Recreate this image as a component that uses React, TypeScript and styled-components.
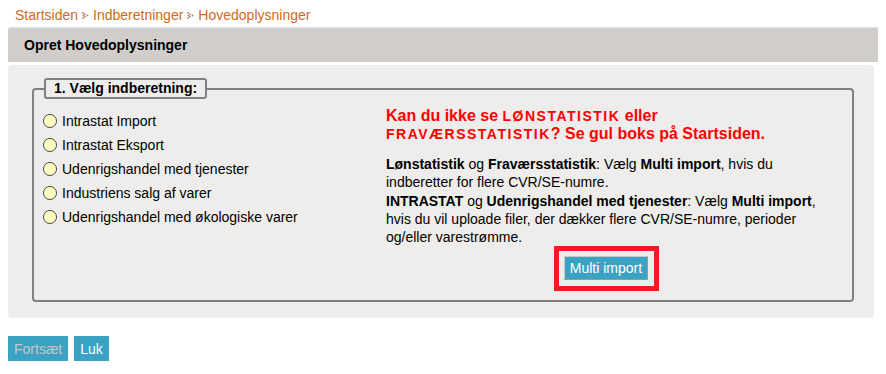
import styled, { createGlobalStyle } from "styled-components";

const GlobalStyle = createGlobalStyle`
  body {
    margin: 8px;
    background: #ffffff;
    font-family: "Liberation Sans", Arial, sans-serif;
    font-size: 14px;
    color: #000;
    overflow: hidden;
  }
`;

const Breadcrumb = styled.nav`
  height: 19px;
  padding-left: 7px;
  display: flex;
  align-items: flex-start;
  gap: 4px;
  font-size: 14px;
  color: #d06a1c;
  line-height: 15px;
`;

const Crumb = styled.a`
  color: #d06a1c;
  text-decoration: none;
`;

const SepIcon = styled.svg`
  margin-top: 4px;
`;

const Header = styled.div`
  height: 35px;
  margin-right: -8px;
  background: #d1cdca;
  border-top: 1px solid #e4e2e0;
  box-sizing: border-box;
  border-radius: 3px 0 0 0;
  display: flex;
  align-items: center;
  padding-left: 16px;
  font-size: 14px;
  font-weight: bold;
`;

const Panel = styled.div`
  margin: 3px 4px 0 0;
  background: #eeedeb;
  border-radius: 4px;
  padding: 13px 20px 16px 24px;
`;

const Fieldset = styled.fieldset`
  margin: 0;
  border: 2px solid #808080;
  border-radius: 4px;
  padding: 8px 8px 9px 8px;
`;

const Legend = styled.legend`
  margin-left: 2px;
  padding: 1px 8px 2px;
  border: 2px solid #808080;
  border-radius: 3px;
  background: #eeedeb;
  font-size: 14px;
  font-weight: bold;
  line-height: 14px;
`;

const Columns = styled.div`
  display: flex;
`;

const RadioList = styled.ul`
  list-style: none;
  margin: 2px 0 0 0;
  padding: 0;
  width: 344px;
`;

const RadioRow = styled.li`
  height: 24px;
  display: flex;
  align-items: center;
  gap: 5px;
`;

const Radio = styled.input`
  appearance: none;
  margin: 0 0 0 1px;
  width: 14px;
  height: 14px;
  border-radius: 50%;
  border: 1px solid #4a4a4a;
  background: #ffffc2;
  box-sizing: border-box;
`;

const Info = styled.div`
  width: 445px;
  display: flex;
  flex-direction: column;
`;

const Warning = styled.p`
  margin: 0;
  max-width: 400px;
  color: #ff0000;
  font-size: 16px;
  font-weight: bold;
  line-height: 17px;
`;

const Caps = styled.span`
  font-size: 14px;
  letter-spacing: 1.5px;
`;

const Body = styled.p`
  margin: 12px 0 0 0;
  font-size: 14px;
  line-height: 18.25px;
`;

const Highlight = styled.div`
  align-self: center;
  margin: 0 0 0 -4px;
  border: 5px solid #ee1c25;
  padding: 5px 6px 6px 5px;
`;

const Button = styled.button<{ $disabled?: boolean }>`
  font-family: "Liberation Sans", Arial, sans-serif;
  font-size: 14px;
  background: #3aa2c2;
  color: ${(p) => (p.$disabled ? "#c4c8cb" : "#ffffff")};
  border: none;
  padding: 0 6px;
  height: 25px;
  cursor: pointer;
`;

const ImportButton = styled(Button)`
  height: 24px;
  padding: 0 5px;
  border: 1px solid #9a9a9a;
  border-top-color: #c8c8c8;
  border-left-color: #c8c8c8;
`;

const Footer = styled.div`
  margin-top: 18px;
  display: flex;
  gap: 6px;
`;

function Sep() {
  return (
    <SepIcon width="7" height="7" viewBox="0 0 7 7">
      <g fill="#b08060">
        <circle cx="1" cy="1" r="0.9" />
        <circle cx="3" cy="2.3" r="0.9" />
        <circle cx="5.5" cy="3.5" r="0.9" />
        <circle cx="3" cy="4.7" r="0.9" />
        <circle cx="1" cy="6" r="0.9" />
        <circle cx="1.5" cy="3.5" r="0.9" />
      </g>
    </SepIcon>
  );
}

const options = [
  "Intrastat Import",
  "Intrastat Eksport",
  "Udenrigshandel med tjenester",
  "Industriens salg af varer",
  "Udenrigshandel med økologiske varer",
];

export default function App() {
  return (
    <>
      <GlobalStyle />
      <Breadcrumb>
        <Crumb href="#">Startsiden</Crumb>
        <Sep />
        <Crumb href="#">Indberetninger</Crumb>
        <Sep />
        <Crumb href="#">Hovedoplysninger</Crumb>
      </Breadcrumb>
      <Header>Opret Hovedoplysninger</Header>
      <Panel>
        <Fieldset>
          <Legend>1. Vælg indberetning:</Legend>
          <Columns>
            <RadioList>
              {options.map((o) => (
                <RadioRow key={o}>
                  <Radio type="radio" name="type" />
                  {o}
                </RadioRow>
              ))}
            </RadioList>
            <Info>
              <Warning>
                Kan du ikke se <Caps>LØNSTATISTIK</Caps> eller{" "}
                <Caps>FRAVÆRSSTATISTIK</Caps>? Se gul boks på Startsiden.
              </Warning>
              <Body>
                <b>Lønstatistik</b> og <b>Fraværsstatistik</b>: Vælg{" "}
                <b>Multi import</b>, hvis du indberetter for flere CVR/SE-numre.
                <br />
                <b>INTRASTAT</b> og <b>Udenrigshandel med tjenester</b>: Vælg{" "}
                <b>Multi import</b>, hvis du vil uploade filer, der dækker flere
                CVR/SE-numre, perioder og/eller varestrømme.
              </Body>
              <Highlight>
                <ImportButton>Multi import</ImportButton>
              </Highlight>
            </Info>
          </Columns>
        </Fieldset>
      </Panel>
      <Footer>
        <Button $disabled>Fortsæt</Button>
        <Button>Luk</Button>
      </Footer>
    </>
  );
}
